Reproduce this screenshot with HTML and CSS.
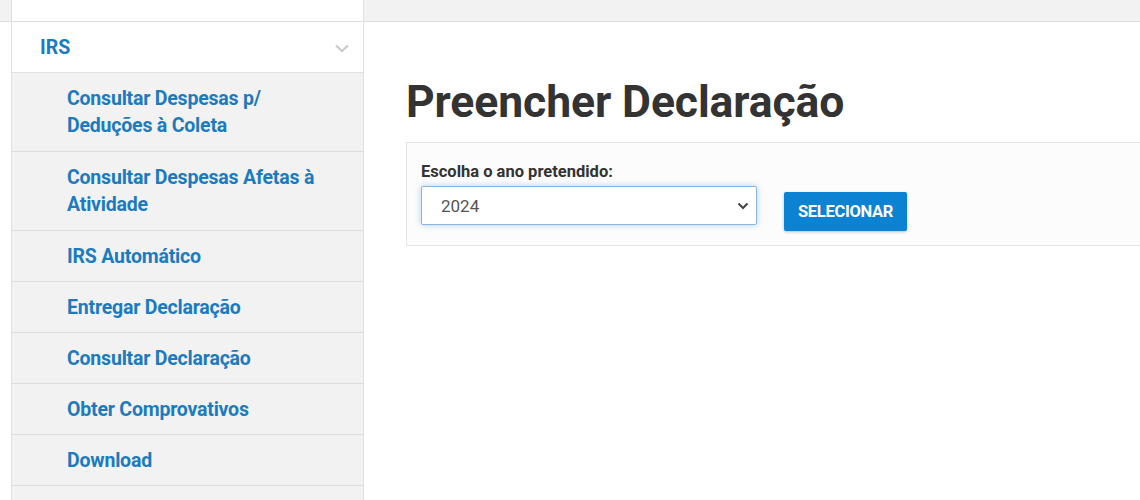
FILE: index.html
```html
<!DOCTYPE html>
<html lang="pt">
<head>
<meta charset="utf-8">
<title>Preencher Declaração</title>
<link rel="stylesheet" href="styles.css">
</head>
<body>
<div class="page">
  <div class="gutter"><div class="band"></div></div>
  <aside class="sidebar">
    <div class="prev"></div>
    <div class="group-head">
      <span class="group-title">IRS</span>
      <svg class="chev" width="14" height="9" viewBox="0 0 14 9"><path d="M1 1.5 L7 7 L13 1.5" fill="none" stroke="#c9c9c9" stroke-width="2.2"/></svg>
    </div>
    <ul class="menu">
      <li class="two"><a href="#">Consultar Despesas p/<br>Deduções à Coleta</a></li>
      <li class="two"><a href="#">Consultar Despesas Afetas à<br>Atividade</a></li>
      <li><a href="#">IRS Automático</a></li>
      <li><a href="#">Entregar Declaração</a></li>
      <li><a href="#">Consultar Declaração</a></li>
      <li><a href="#">Obter Comprovativos</a></li>
      <li><a href="#">Download</a></li>
      <li><a href="#">&nbsp;</a></li>
    </ul>
  </aside>
  <main class="main">
    <div class="band"></div>
    <div class="content">
      <h1 class="title">Preencher Declaração</h1>
      <div class="card">
        <div class="field">
          <label class="label">Escolha o ano pretendido:</label>
          <div class="select">
            <span class="select-value">2024</span>
            <svg class="select-chev" width="12" height="8" viewBox="0 0 12 8"><path d="M1.5 1.5 L6 6 L10.5 1.5" fill="none" stroke="#444" stroke-width="2"/></svg>
          </div>
        </div>
        <button class="btn">SELECIONAR</button>
      </div>
    </div>
  </main>
</div>
</body>
</html>
```

FILE: styles.css
```css
* { box-sizing: border-box; }
html, body { margin: 0; padding: 0; }
body {
  font-family: Roboto, "Liberation Sans", Arial, sans-serif;
  background: #fff;
  width: 1140px;
  height: 500px;
  overflow: hidden;
}
.page {
  display: flex;
  align-items: flex-start;
}
.band {
  height: 22px;
  background: #f2f2f2;
  border-bottom: 1px solid #dedede;
}
.gutter {
  width: 11px;
  flex: none;
}
.sidebar {
  width: 353px;
  flex: none;
  border-left: 1px solid #e0e0e0;
  border-right: 1px solid #e0e0e0;
  background: #fff;
}
.prev {
  height: 22px;
  background: #fff;
  border-bottom: 1px solid #dedede;
}
.group-head {
  height: 51px;
  display: flex;
  align-items: center;
  justify-content: space-between;
  padding: 0 14px 0 28px;
  border-bottom: 1px solid #e0e0e0;
}
.group-title {
  color: #1b7bc0;
  font-weight: 700;
  font-size: 19.5px;
}
.chev { margin-top: 2px; }
.menu {
  list-style: none;
  margin: 0;
  padding: 0;
  background: #f2f2f2;
}
.menu li {
  border-bottom: 1px solid #dcdcdc;
}
.menu a {
  display: block;
  padding: 12px 8px 11px 55px;
  line-height: 27px;
  font-size: 19.5px;
  font-weight: 700;
  color: #1b7bc0;
  text-decoration: none;
  letter-spacing: -0.2px;
}
.menu .two a {
  padding-bottom: 12px;
}
.main {
  flex: 1;
  min-width: 0;
}
.content {
  padding: 55px 0 0 42px;
}
.title {
  margin: 0;
  font-size: 44.5px;
  line-height: 50px;
  font-weight: 700;
  color: #333;
  letter-spacing: -0.1px;
}
.card {
  margin-top: 15px;
  width: 760px;
  height: 104px;
  background: #fcfcfc;
  border: 1px solid #e3e3e3;
  display: flex;
  align-items: flex-start;
  padding: 19px 0 0 14px;
}
.field {
  display: flex;
  flex-direction: column;
}
.label {
  font-size: 16.5px;
  font-weight: 700;
  color: #333;
  line-height: 20px;
  margin-bottom: 4px;
}
.select {
  width: 336px;
  height: 39px;
  border: 1px solid #8ab6e2;
  border-radius: 2px;
  background: #fff;
  box-shadow: 0 0 6px rgba(90, 150, 220, 0.45);
  display: flex;
  align-items: center;
  justify-content: space-between;
  padding: 0 7px 0 19px;
}
.select-value {
  font-size: 17px;
  color: #555;
}
.btn {
  margin: 30px 0 0 27px;
  height: 39px;
  padding: 0 14px;
  background: #0c82d3;
  color: #fff;
  border: none;
  border-radius: 2px;
  font-family: Roboto, "Liberation Sans", Arial, sans-serif;
  font-size: 16.5px;
  font-weight: 700;
  letter-spacing: -0.3px;
  box-shadow: 0 1px 3px rgba(0,0,0,0.25);
}
```
